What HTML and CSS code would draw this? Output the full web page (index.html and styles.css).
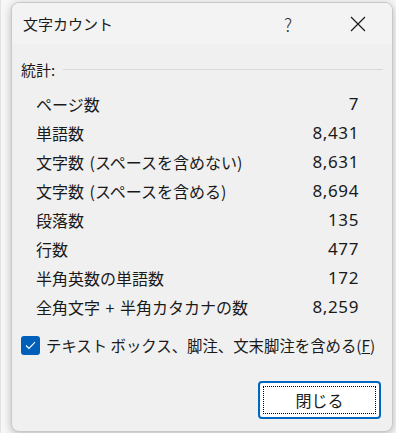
FILE: index.html
```html
<!DOCTYPE html>
<html lang="ja">
<head>
  <meta charset="UTF-8" />
  <title>文字カウント</title>
  <link rel="stylesheet" href="styles.css">
</head>
<body>

  <div class="dialog">
    <div class="titlebar">
      <span class="title">文字カウント</span>
      <span class="help">?</span>
      <span class="close">
        <svg width="16" height="16" viewBox="0 0 16 16">
          <path d="M1 1 L15 15 M15 1 L1 15" stroke="#1a1a1a" stroke-width="1.2" fill="none"/>
        </svg>
      </span>
    </div>

    <div class="group-head">
      <span>統計:</span>
      <div class="rule"></div>
    </div>

    <div class="stats">
      <div class="row"><span>ページ数</span><span class="num">7</span></div>
      <div class="row"><span>単語数</span><span class="num">8,431</span></div>
      <div class="row"><span>文字数 (スペースを含めない)</span><span class="num">8,631</span></div>
      <div class="row"><span>文字数 (スペースを含める)</span><span class="num">8,694</span></div>
      <div class="row"><span>段落数</span><span class="num">135</span></div>
      <div class="row"><span>行数</span><span class="num">477</span></div>
      <div class="row"><span>半角英数の単語数</span><span class="num">172</span></div>
      <div class="row"><span>全角文字 + 半角カタカナの数</span><span class="num">8,259</span></div>
    </div>

    <label class="check">
      <span class="box">
        <svg width="11" height="9" viewBox="0 0 11 9">
          <path d="M1 4.5 L4 7.5 L10 1.2" stroke="#fff" stroke-width="1.1" fill="none"/>
        </svg>
      </span>
      <span>テキスト ボックス、脚注、文末脚注を含める(<u>F</u>)</span>
    </label>

    <div class="footer">
      <button class="btn"><span class="focus">閉じる</span></button>
    </div>
  </div>

</body>
</html>
```

FILE: styles.css
```css
body {
  margin: 0;
  padding: 2px 4px 1px 10px;
  background: #f7f7f7;
  font-family: "Noto Sans CJK JP", "Noto Sans", sans-serif;
  color: #1a1a1a;
  border-left: 1px solid #e2e2e2;
}

.dialog {
  width: 382px;
  height: 430px;
  box-sizing: border-box;
  background: #f0f0f0;
  border: 1px solid #c8c8c8;
  border-radius: 8px;
  box-shadow: 0 2px 8px rgba(0, 0, 0, 0.25);
  display: flex;
  flex-direction: column;
  overflow: hidden;
}

.titlebar {
  height: 41px;
  flex-shrink: 0;
  background: #f3f3f3;
  display: flex;
  align-items: center;
  padding-left: 11px;
  font-size: 15px;
}

.title {
  flex: 1;
}

.help {
  font-size: 18px;
  font-weight: 300;
  width: 20px;
  margin-right: 46px;
  color: #333;
}

.close {
  display: flex;
  margin-right: 26px;
}

.group-head {
  margin-top: 15px;
  height: 20px;
  display: flex;
  align-items: center;
  padding: 0 9px 0 9px;
  font-size: 15px;
}

.rule {
  flex: 1;
  height: 1px;
  background: #d9d9d9;
  margin-left: 8px;
}

.stats {
  margin-top: 10px;
  padding: 0 33px 0 24px;
}

.row {
  height: 29px;
  display: flex;
  align-items: center;
  justify-content: space-between;
  font-size: 16px;
  word-spacing: 2px;
}

.num {
  font-family: "Noto Sans", sans-serif;
  font-size: 17px;
  letter-spacing: 0.6px;
}

.check {
  margin-top: 14px;
  height: 20px;
  display: flex;
  align-items: center;
  padding-left: 9px;
  font-size: 15.4px;
}

.box {
  width: 19px;
  height: 19px;
  border-radius: 3px;
  background: #005fb8;
  display: flex;
  align-items: center;
  justify-content: center;
  margin-right: 6px;
}

.footer {
  margin-top: 26px;
  display: flex;
  justify-content: flex-end;
  padding-right: 11px;
}

.btn {
  width: 123px;
  height: 38px;
  padding: 3px;
  background: #fff;
  border: 2px solid #0067c0;
  border-radius: 4px;
  font-family: inherit;
  font-size: 16px;
  color: #1a1a1a;
}

.focus {
  display: flex;
  height: 100%;
  align-items: center;
  justify-content: center;
  border: 1px dotted #000;
  box-sizing: border-box;
}
```
